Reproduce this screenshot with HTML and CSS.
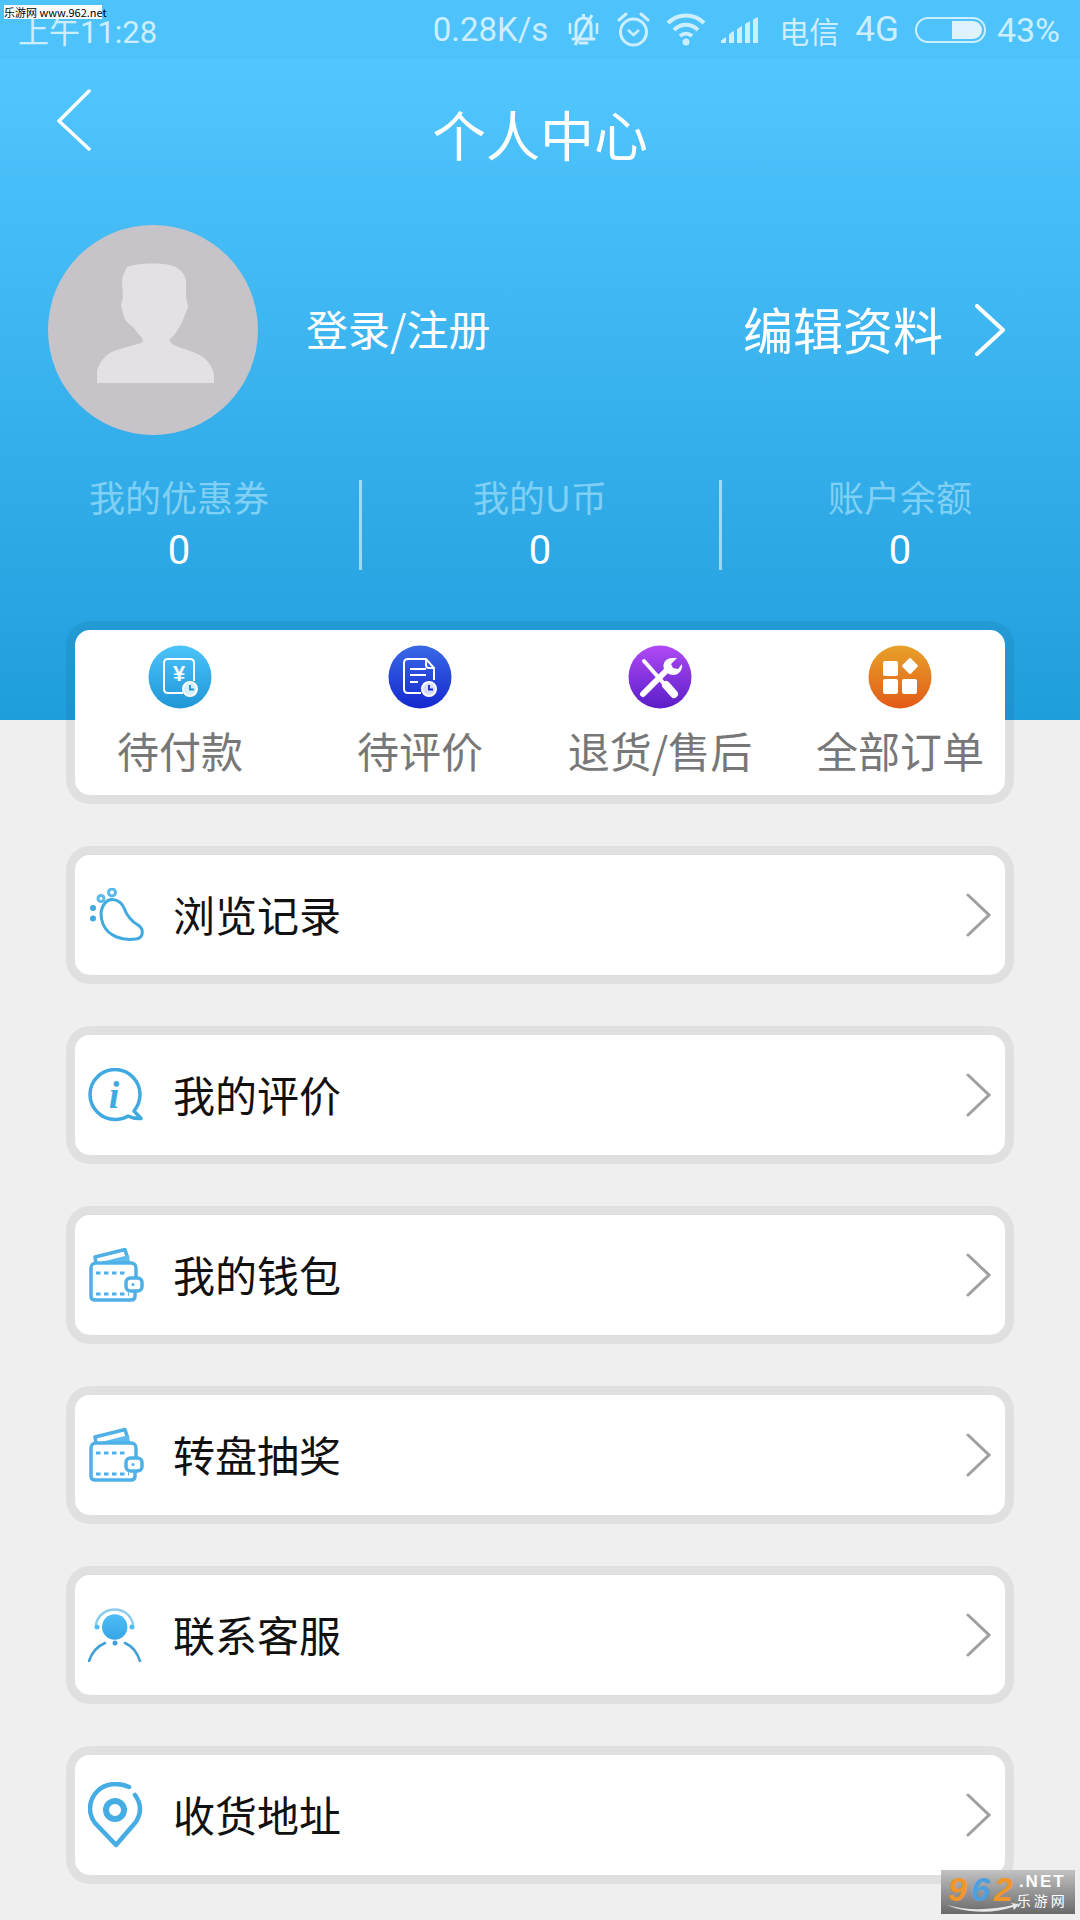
FILE: index.html
```html
<!DOCTYPE html>
<html lang="zh-CN">
<head>
    <meta charset="UTF-8">
    <meta name="viewport" content="width=device-width, initial-scale=1.0">
    <title>个人中心</title>
    <link rel="stylesheet" href="styles.css">
</head>
<body>
<div class="page">

    <div class="site-tag">乐游网 www.962.net</div>

    <div class="header">
        <div class="status-bar">
            <span class="status-time">上午11:28</span>
            <div class="status-right">
                <span class="status-speed">0.28K/s</span>
                <svg class="st-bell" width="33" height="36" viewBox="0 0 33 36" fill="none" stroke="#cdeefe" stroke-width="3">
                    <path d="M9 26V14C9 9 12 6 16.500 6S24 9 24 14V26"/>
                    <path d="M6 27H27M13 31H20" stroke-linecap="round"/>
                    <path d="M16.500 2V6M25 3L8 33"/>
                    <path d="M3 11V22M30 11V22" stroke-width="2.500"/>
                </svg>
                <svg class="st-alarm" width="33" height="38" viewBox="0 0 33 38" fill="none" stroke="#cdeefe" stroke-width="3">
                    <circle cx="16.500" cy="21" r="13"/>
                    <path d="M11 19L16.500 24L22 19" stroke-width="2.500"/>
                    <path d="M2 9L9 3M31 9L24 3" stroke-linecap="round"/>
                </svg>
                <svg class="st-wifi" width="40" height="36" viewBox="0 0 40 36" fill="none" stroke="#cdeefe" stroke-width="4">
                    <path d="M2 11C12 1 28 1 38 11"/>
                    <path d="M8 18C15 11 25 11 32 18"/>
                    <path d="M14 24C17.500 21 22.500 21 26 24"/>
                    <circle cx="20" cy="30" r="3.500" fill="#cdeefe" stroke="none"/>
                </svg>
                <svg class="st-signal" width="39" height="26" viewBox="0 0 39 30" fill="#cdeefe" preserveAspectRatio="none">
                    <path d="M0 30V27L5 23V30Z"/>
                    <path d="M8 30V20L13 16V30Z"/>
                    <path d="M16 30V14L21 10V30Z"/>
                    <path d="M24 30V8L29 5V30Z"/>
                    <path d="M32 30V3L37 0V30Z"/>
                </svg>
                <span class="status-carrier">电信</span>
                <span class="status-net">4G</span>
                <div class="battery"><div class="battery-level"></div></div>
                <span class="status-pct">43%</span>
            </div>
        </div>

        <div class="nav">
            <svg class="back" width="36" height="62" viewBox="0 0 36 62" fill="none" stroke="#fff" stroke-width="3.500" stroke-linecap="round" stroke-linejoin="round">
                <path d="M33 2L3 32L33 60" />
            </svg>
            <div class="nav-title">个人中心</div>
        </div>

        <div class="profile">
            <div class="avatar">
                <svg width="117" height="120" viewBox="0 0 117 120" fill="#e4e1e6">
                    <path d="M30 4C38 1 46 1 54 .5C62 0 72 1 79 4C85 8 88 12 89 17L89 34L91 44L86 57C82 66 78 72 72 77C75 81 78 83 82 84C90 87 100 90 106 94C112 99 116 105 117 112V120H0V108C2 100 7 94 13 90C22 85 36 83 46 79L45 75C42 72 39 68 37 65C33 62 29 59 27 54L24 43L26 34L25 17C26 12 28 8 30 4Z"/>
                </svg>
            </div>
            <div class="login">登录/注册</div>
            <div class="edit">编辑资料</div>
            <svg class="edit-arrow" width="32" height="52" viewBox="0 0 32 52" fill="none" stroke="#fff" stroke-width="4" stroke-linecap="round" stroke-linejoin="round">
                <path d="M3 2L29 26L3 50"/>
            </svg>
        </div>

        <div class="stats">
            <div class="stat">
                <div class="stat-label">我的优惠券</div>
                <div class="stat-num">0</div>
            </div>
            <div class="stat">
                <div class="stat-label">我的U币</div>
                <div class="stat-num">0</div>
            </div>
            <div class="stat">
                <div class="stat-label">账户余额</div>
                <div class="stat-num">0</div>
            </div>
        </div>
    </div>

    <div class="orders">
        <div class="order-grid">
            <div class="order">
                <svg width="64" height="64" viewBox="0 0 64 64">
                    <defs><linearGradient id="g1" x1="0" y1="0" x2="0" y2="1"><stop offset="0" stop-color="#4dc3fb"/><stop offset="1" stop-color="#1f96d6"/></linearGradient></defs>
                    <circle cx="32" cy="32" r="31.500" fill="url(#g1)"/>
                    <path d="M35 48H20C17.500 48 16 46.500 16 44V18C16 15.500 17.500 14 20 14H42C44.500 14 46 15.500 46 18V36" fill="none" stroke="#fff" stroke-width="2"/>
                    <text x="31" y="36" class="icon-text" font-size="22" fill="#fff" text-anchor="middle">¥</text>
                    <circle cx="42" cy="44" r="7" fill="#d4effd" stroke="#fff" stroke-width="2"/>
                    <path d="M42 40V44.500H46" fill="none" stroke="#1f96d6" stroke-width="1.800"/>
                </svg>
                <div class="order-name">待付款</div>
            </div>
            <div class="order">
                <svg width="64" height="64" viewBox="0 0 64 64">
                    <defs><linearGradient id="g2" x1="0" y1="0" x2="0" y2="1"><stop offset="0" stop-color="#3a69e4"/><stop offset="1" stop-color="#1428cf"/></linearGradient></defs>
                    <circle cx="32" cy="32" r="31.500" fill="url(#g2)"/>
                    <path d="M33 48H20C17.500 48 16 46.500 16 44V18C16 15.500 17.500 14 20 14H38L46 23V35" fill="none" stroke="#fff" stroke-width="2"/>
                    <path d="M38 14V20C38 22 39 23 41 23H46" fill="none" stroke="#fff" stroke-width="2"/>
                    <path d="M22 24H38M22 30H38M22 37H30" stroke="#fff" stroke-width="2"/>
                    <circle cx="41" cy="44" r="7" fill="#d6dcf9" stroke="#fff" stroke-width="2"/>
                    <path d="M41 40V44.500H45" fill="none" stroke="#1428cf" stroke-width="1.800"/>
                </svg>
                <div class="order-name">待评价</div>
            </div>
            <div class="order">
                <svg width="64" height="64" viewBox="0 0 64 64">
                    <defs><linearGradient id="g3" x1="0" y1="0" x2="0" y2="1"><stop offset="0" stop-color="#b04af5"/><stop offset="1" stop-color="#5a1ec8"/></linearGradient></defs>
                    <circle cx="32" cy="32" r="31.500" fill="url(#g3)"/>
                    <path d="M16 16L38 41" stroke="#fff" stroke-width="4" stroke-linecap="round" fill="none"/>
                    <path d="M38 40L46 49" stroke="#fff" stroke-width="8" stroke-linecap="round"/>
                    <path d="M15 49L39 25" stroke="#fff" stroke-width="6" stroke-linecap="round"/>
                    <path d="M36 24C34 18 38 13 44 13L49 13L43 19L45 23L50 24L54 19C55 25 51 30 45 30C41 30 38 27 36 24Z" fill="#fff"/>
                </svg>
                <div class="order-name">退货/售后</div>
            </div>
            <div class="order">
                <svg width="64" height="64" viewBox="0 0 64 64" fill="#fff">
                    <defs><linearGradient id="g4" x1="0" y1="0" x2="0" y2="1"><stop offset="0" stop-color="#e8a22a"/><stop offset="1" stop-color="#e25a18"/></linearGradient></defs>
                    <circle cx="32" cy="32" r="31.500" fill="url(#g4)"/>
                    <rect x="15" y="16" width="15" height="15" rx="2"/>
                    <rect x="15" y="34" width="15" height="15" rx="2"/>
                    <rect x="34" y="34" width="15" height="15" rx="2"/>
                    <rect x="36" y="15" width="12" height="12" rx="1.500" transform="rotate(45 42 21)"/>
                </svg>
                <div class="order-name">全部订单</div>
            </div>
        </div>
    </div>

    <div class="menu">
        <div class="menu-row">
            <div class="menu-icon">
                <svg width="56" height="54" viewBox="0 0 56 54" fill="none" stroke="#3fa9e0" stroke-width="3">
                    <path d="M17 15C22 9 32 11 36 20C39 28 43 33 50 37C56 41 56 50 48 51C34 53 20 48 15 36C12 28 13 20 17 15Z"/>
                    <circle cx="24" cy="4.500" r="3.500" stroke="#5ab9ea"/>
                    <circle cx="13" cy="10.500" r="3" stroke="#5ab9ea"/>
                    <circle cx="5" cy="20" r="3" fill="#3fa9e0" stroke="none"/>
                    <circle cx="5" cy="30.500" r="3" fill="#3fa9e0" stroke="none"/>
                </svg>
            </div>
            <div class="menu-name">浏览记录</div>
            <svg class="arrow" width="25" height="44" viewBox="0 0 25 44" fill="none" stroke="#a0a0a0" stroke-width="3" stroke-linecap="round"><path d="M2 2L23 22L2 42"/></svg>
        </div>
        <div class="menu-row">
            <div class="menu-icon">
                <svg width="56" height="54" viewBox="0 0 56 54" fill="none" stroke="#3fa9e0" stroke-width="3.500">
                    <path d="M40 48C36 50.500 32 51.500 27 51.500C13 51.500 2 40 2 26.500S13 1.500 27 1.500S52 13 52 26.500C52 33 50 38 46 43L53 50.500C48 51 44 50 40 48Z" stroke-linejoin="round"/>
                    <text x="26" y="40" class="icon-i" font-size="38" fill="#3fa9e0" stroke="none" text-anchor="middle">i</text>
                </svg>
            </div>
            <div class="menu-name">我的评价</div>
            <svg class="arrow" width="25" height="44" viewBox="0 0 25 44" fill="none" stroke="#a0a0a0" stroke-width="3" stroke-linecap="round"><path d="M2 2L23 22L2 42"/></svg>
        </div>
        <div class="menu-row">
            <div class="menu-icon">
                <svg width="56" height="54" viewBox="0 0 56 54" fill="none" stroke="#4eb0e6" stroke-width="3.500">
                    <path d="M8 15L7 9L37 1.500L39 8" stroke-linejoin="round"/>
                    <path d="M9 15L41 7L42 15Z" fill="#5dbbee" stroke="none"/>
                    <path d="M47 43V48C47 50.500 45.500 52 43 52H7C4.500 52 3 50.500 3 48V20C3 17 5 15 8 15H43C46 15 48 17 48 20V30"/>
                    <rect x="38" y="30" width="16" height="13" rx="4.500" fill="#fff"/>
                    <circle cx="45" cy="36.500" r="1.500" fill="#4eb0e6" stroke="none"/>
                    <path d="M8 25H37M8 46H41" stroke-dasharray="4.500 3.500" stroke-width="3"/>
                </svg>
            </div>
            <div class="menu-name">我的钱包</div>
            <svg class="arrow" width="25" height="44" viewBox="0 0 25 44" fill="none" stroke="#a0a0a0" stroke-width="3" stroke-linecap="round"><path d="M2 2L23 22L2 42"/></svg>
        </div>
        <div class="menu-row">
            <div class="menu-icon">
                <svg width="56" height="54" viewBox="0 0 56 54" fill="none" stroke="#4eb0e6" stroke-width="3.500">
                    <path d="M8 15L7 9L37 1.500L39 8" stroke-linejoin="round"/>
                    <path d="M9 15L41 7L42 15Z" fill="#5dbbee" stroke="none"/>
                    <path d="M47 43V48C47 50.500 45.500 52 43 52H7C4.500 52 3 50.500 3 48V20C3 17 5 15 8 15H43C46 15 48 17 48 20V30"/>
                    <rect x="38" y="30" width="16" height="13" rx="4.500" fill="#fff"/>
                    <circle cx="45" cy="36.500" r="1.500" fill="#4eb0e6" stroke="none"/>
                    <path d="M8 25H37M8 46H41" stroke-dasharray="4.500 3.500" stroke-width="3"/>
                </svg>
            </div>
            <div class="menu-name">转盘抽奖</div>
            <svg class="arrow" width="25" height="44" viewBox="0 0 25 44" fill="none" stroke="#a0a0a0" stroke-width="3" stroke-linecap="round"><path d="M2 2L23 22L2 42"/></svg>
        </div>
        <div class="menu-row">
            <div class="menu-icon">
                <svg width="56" height="54" viewBox="0 0 56 54" fill="none" stroke="#3f9fd6" stroke-width="2.500" stroke-linecap="round">
                    <defs><linearGradient id="g5" x1="0" y1="0" x2="0" y2="1"><stop offset="0" stop-color="#4cbcf6"/><stop offset="1" stop-color="#38a6e6"/></linearGradient></defs>
                    <circle cx="26.700" cy="19" r="12.700" fill="url(#g5)" stroke="none"/>
                    <path d="M8 16C10 7 18 1.500 26.700 1.500S43 7 45 16" stroke="#8ccdee"/>
                    <circle cx="9" cy="19" r="2.500" fill="#4cbcf6" stroke="none"/>
                    <circle cx="44" cy="19" r="2.500" fill="#4cbcf6" stroke="none"/>
                    <path d="M1 53C4 44 10 38 17 35"/>
                    <path d="M37 35C44 38 49 44 52 53"/>
                    <circle cx="27" cy="35" r="2.500" fill="#3f9fd6" stroke="none"/>
                </svg>
            </div>
            <div class="menu-name">联系客服</div>
            <svg class="arrow" width="25" height="44" viewBox="0 0 25 44" fill="none" stroke="#a0a0a0" stroke-width="3" stroke-linecap="round"><path d="M2 2L23 22L2 42"/></svg>
        </div>
        <div class="menu-row">
            <div class="menu-icon">
                <svg width="56" height="66" viewBox="0 0 56 66" fill="none" stroke="#45ade4" stroke-width="4.500" stroke-linejoin="round" stroke-linecap="round">
                    <path d="M41 5C37 3 32 2 27 2C13 2 2 13 2 27C2 33 4 37 7 41L28 63L47 41C50 37 52 33 52 27C52 21 50 17 47 13"/>
                    <circle cx="27" cy="28" r="9" stroke-width="6"/>
                </svg>
            </div>
            <div class="menu-name">收货地址</div>
            <svg class="arrow" width="25" height="44" viewBox="0 0 25 44" fill="none" stroke="#a0a0a0" stroke-width="3" stroke-linecap="round"><path d="M2 2L23 22L2 42"/></svg>
        </div>
    </div>

    <div class="badge">
        <div class="badge-logo"><span class="b-or">9</span><span class="b-bl">6</span><span class="b-or">2</span></div>
        <div class="badge-side">
            <div class="badge-net">.NET</div>
            <div class="badge-cn">乐游网</div>
        </div>
        <svg class="badge-swoosh" width="72" height="10" viewBox="0 0 72 10" fill="#e8e8e8">
            <path d="M0 2C20 8 46 7 66 2L64 0L72 1L67 7L66 4C46 11 18 10 0 2Z"/>
        </svg>
    </div>

</div>
</body>
</html>
```

FILE: styles.css
```css
body {
    margin: 0;
    background-color: #efefef;
    font-family: "Noto Sans CJK SC", "Noto Sans", sans-serif;
}

.page {
    position: relative;
    width: 1080px;
    height: 1920px;
    overflow: hidden;
    background-color: #efefef;
}

.site-tag {
    position: absolute;
    top: 5px;
    left: 4px;
    width: 98px;
    height: 14px;
    background-color: #fff;
    color: #000;
    font-size: 11px;
    line-height: 14px;
    white-space: nowrap;
    text-align: center;
    z-index: 2;
}

.header {
    height: 720px;
    background: linear-gradient(#52c6ff 8%, #1f9edc 100%);
}

.status-bar {
    display: flex;
    align-items: center;
    justify-content: space-between;
    box-sizing: border-box;
    height: 60px;
    padding: 0 20px 0 18px;
    background-color: #4ec3fb;
    border-bottom: 1px solid #55c5fb;
    color: #cdeefe;
    font-family: Roboto, "Noto Sans CJK SC", sans-serif;
    font-size: 33px;
}

.status-time {
    font-size: 31px;
}

.status-right {
    display: flex;
    align-items: center;
}

.status-speed { margin-right: 19px; }
.st-bell { margin-right: 17px; }
.st-alarm { margin-right: 16px; }
.st-wifi { margin-right: 15px; }
.st-signal { margin-right: 19px; }
.status-carrier { font-size: 30px; margin-right: 16px; }
.status-net { margin-right: 16px; font-size: 35px; }
.status-pct { margin-left: 11px; font-size: 34px; }

.battery {
    box-sizing: border-box;
    width: 71px;
    height: 26px;
    padding: 2px;
    border: 2px solid #cdeefe;
    border-radius: 13px;
    display: flex;
    justify-content: flex-end;
}

.battery-level {
    width: 30px;
    background-color: #dff3fe;
    border-radius: 0 9px 9px 0;
}

.nav {
    display: grid;
    grid-template-columns: 1fr auto 1fr;
    height: 154px;
    align-items: center;
}

.back {
    margin: -34px 0 0 56px;
}

.nav-title {
    margin-top: -6px;
    font-size: 54px;
    color: #fff;
    line-height: 70px;
}

.profile {
    display: flex;
    align-items: center;
    margin-top: 11px;
    padding-left: 48px;
    height: 210px;
}

.avatar {
    display: flex;
    align-items: flex-end;
    justify-content: center;
    box-sizing: border-box;
    width: 210px;
    height: 210px;
    padding: 0 0 52px 5px;
    background-color: #c7c4c9;
    border-radius: 50%;
}

.login {
    margin: -5px 0 0 48px;
    font-size: 42px;
    color: #fff;
}

.edit {
    margin: -4px 0 0 auto;
    font-size: 50px;
    color: #fff;
}

.edit-arrow {
    margin: 0 74px 0 31px;
}

.stats {
    display: grid;
    grid-template-columns: repeat(3, 360px);
    margin-top: 45px;
}

.stat {
    box-sizing: border-box;
    height: 90px;
    padding-right: 2px;
    text-align: center;
}

.stat + .stat {
    border-left: 3px solid rgba(255, 255, 255, 0.55);
    margin-left: -1px;
}

.stat-label {
    margin-top: -3px;
    font-size: 36px;
    line-height: 38px;
    color: #7fd0f4;
}

.stat-num {
    margin-top: 17px;
    font-family: Roboto, sans-serif;
    font-size: 40px;
    line-height: 38px;
    color: #fff;
}

.orders {
    box-sizing: border-box;
    width: 948px;
    height: 183px;
    margin: -99px 0 0 66px;
    background-color: #fff;
    background-clip: padding-box;
    border: 9px solid rgba(0, 0, 0, 0.06);
    border-radius: 24px;
}

.order-grid {
    display: grid;
    grid-template-columns: repeat(4, 240px);
    margin: 0 -15px;
}

.order {
    display: flex;
    flex-direction: column;
    align-items: center;
    padding-top: 15px;
}

.order-name {
    margin-top: 11px;
    font-size: 42px;
    line-height: 60px;
    color: #777;
    white-space: nowrap;
}

.icon-text {
    font-family: "Liberation Sans", sans-serif;
    font-weight: bold;
}

.icon-i {
    font-family: "Liberation Serif", serif;
    font-weight: bold;
    font-style: italic;
}

.menu {
    display: flex;
    flex-direction: column;
    gap: 42px;
    margin: 42px 66px 0;
}

.menu-row {
    display: flex;
    align-items: center;
    box-sizing: border-box;
    height: 138px;
    padding: 0 14px 0 13px;
    background-color: #fff;
    background-clip: padding-box;
    border: 9px solid rgba(0, 0, 0, 0.06);
    border-radius: 24px;
}

.menu-icon {
    display: flex;
    width: 56px;
    margin-right: 29px;
}

.menu-name {
    flex: 1;
    margin-top: -3px;
    font-size: 42px;
    color: #111;
}

.badge {
    position: absolute;
    left: 941px;
    top: 1870px;
    display: flex;
    align-items: flex-start;
    box-sizing: border-box;
    width: 134px;
    height: 44px;
    padding-left: 7px;
    background: linear-gradient(#c2c2c2, #6a6a6a);
}

.badge-logo {
    font-family: "Liberation Sans", sans-serif;
    font-size: 34px;
    font-weight: bold;
    font-style: italic;
    line-height: 38px;
    letter-spacing: 4px;
}

.b-or { color: #f0962a; }
.b-bl { color: #4f9fe0; }

.badge-side {
    color: #fff;
    text-align: center;
}

.badge-net {
    margin-top: 3px;
    font-family: "Liberation Sans", sans-serif;
    font-size: 17px;
    font-weight: bold;
    line-height: 18px;
    letter-spacing: 2px;
}

.badge-cn {
    font-size: 14px;
    line-height: 18px;
    letter-spacing: 3px;
}

.badge-swoosh {
    position: absolute;
    left: 6px;
    bottom: 1px;
}
```
